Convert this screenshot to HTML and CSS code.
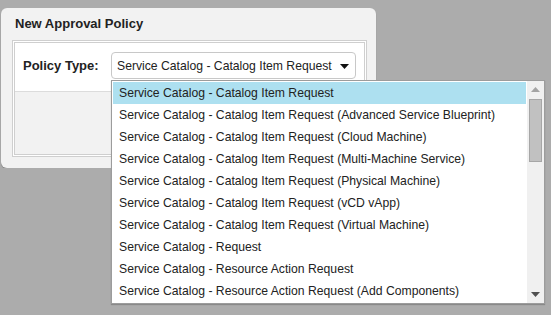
FILE: index.html
```html
<!DOCTYPE html>
<html>
<head>
  <meta charset="UTF-8">
  <title>New Approval Policy</title>
  <link rel="stylesheet" href="styles.css">
</head>
<body>
  <div class="panel">
    <h2>New Approval Policy</h2>

    <div class="frame">
      <div class="frame-inner">
        <div class="form-row">
          <label for="policy-type">Policy Type:</label>
          <div class="select" id="policy-type">
            <span>Service Catalog - Catalog Item Request</span>
            <svg class="caret" width="9" height="5" viewBox="0 0 9 5"><path d="M0 0h9L4.5 5z" fill="#111"/></svg>
          </div>
        </div>
      </div>
    </div>
  </div>

  <div class="dropdown">
    <ul class="options">
      <li class="active">Service Catalog - Catalog Item Request</li>
      <li>Service Catalog - Catalog Item Request (Advanced Service Blueprint)</li>
      <li>Service Catalog - Catalog Item Request (Cloud Machine)</li>
      <li>Service Catalog - Catalog Item Request (Multi-Machine Service)</li>
      <li>Service Catalog - Catalog Item Request (Physical Machine)</li>
      <li>Service Catalog - Catalog Item Request (vCD vApp)</li>
      <li>Service Catalog - Catalog Item Request (Virtual Machine)</li>
      <li>Service Catalog - Request</li>
      <li>Service Catalog - Resource Action Request</li>
      <li>Service Catalog - Resource Action Request (Add Components)</li>
    </ul>
    <div class="scrollbar">
      <svg class="arrow" width="9" height="5" viewBox="0 0 9 5"><path d="M4.5 0L9 5H0z" fill="#a3a3a3"/></svg>
      <div class="thumb"></div>
      <div class="track"></div>
      <svg class="arrow" width="9" height="5" viewBox="0 0 9 5"><path d="M0 0h9L4.5 5z" fill="#505050"/></svg>
    </div>
  </div>
</body>
</html>
```

FILE: styles.css
```css
body {
  margin: 0;
  background: #acacac;
  font-family: "Liberation Sans", Arial, sans-serif;
  color: #222;
}

.panel {
  position: relative;
  margin: 8px 0 0 1px;
  width: 375px;
  height: 160px;
  box-sizing: border-box;
  padding: 8px 9px 0 11px;
  background: #f2f2f2;
  border-radius: 6px;
  box-shadow: 0 1px 1px rgba(0, 0, 0, 0.25);
}

h2 {
  margin: 0 0 9px 3px;
  font-size: 13px;
  line-height: 15px;
  font-weight: bold;
}

/* double line box */
.frame {
  border: 1px solid #cfcfcf;
  padding: 1px;
  background: #fff;
}

.frame-inner {
  border: 1px solid #cfcfcf;
  background: #f2f2f2;
  height: 111px;
}

.form-row {
  display: flex;
  align-items: center;
  padding: 9px 0 12px 8px;
  background: #fff;
  border-bottom: 1px solid #dcdcdc;
}

label {
  width: 88px;
  font-size: 13px;
  line-height: 15px;
  font-weight: bold;
}

.select {
  width: 245px;
  height: 27px;
  box-sizing: border-box;
  display: flex;
  align-items: center;
  justify-content: space-between;
  padding: 0 6px 0 5px;
  border: 1px solid #c8c8c8;
  border-radius: 4px;
  background: #fff;
  font-size: 12.2px;
}

.caret {
  margin-top: 1px;
}

/* open list of the select */
.dropdown {
  position: absolute;
  left: 111px;
  top: 80px;
  width: 434px;
  height: 224px;
  box-sizing: border-box;
  display: flex;
  border: 1px solid #9c9c9c;
  background: #fff;
  box-shadow: 0 1px 1px rgba(0, 0, 0, 0.2);
}

.options {
  flex: 1;
  list-style: none;
  margin: 0;
  padding: 1px;
}

.options li {
  height: 22px;
  line-height: 22px;
  padding-left: 6px;
  font-size: 12.2px;
  white-space: nowrap;
}

.options li.active {
  background: #ade0f0;
}

.scrollbar {
  width: 17px;
  display: flex;
  flex-direction: column;
  align-items: center;
  background: #f0f0f0;
}

.scrollbar .arrow {
  margin: 6px 0;
}

.thumb {
  width: 13px;
  height: 63px;
  box-sizing: border-box;
  margin-top: 1px;
  background: #c1c1c1;
  border: 1px solid #a6a6a6;
}

.track {
  flex: 1;
}
```
